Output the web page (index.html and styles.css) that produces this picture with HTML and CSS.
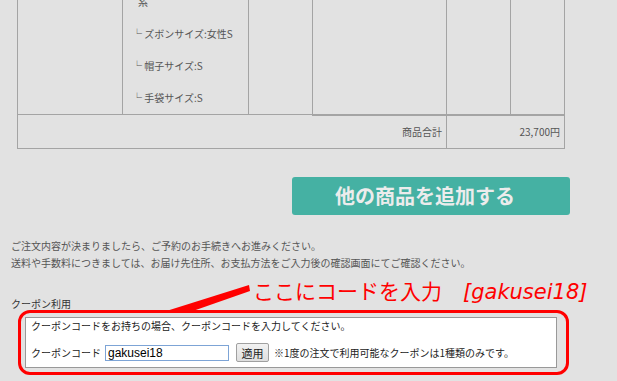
FILE: index.html
```html
<!DOCTYPE html>
<html lang="ja">
<head>
<meta charset="utf-8">
<title>カート</title>
<link rel="stylesheet" href="styles.css">
</head>
<body>
<div class="page">
  <table class="cart">
    <colgroup>
      <col class="c1"><col class="c2"><col class="c3"><col class="c4"><col class="c5"><col class="c6">
    </colgroup>
    <tr class="item">
      <td></td>
      <td class="opts">
        <div class="opt opt-wrap">系</div>
        <div class="opt">└ ズボンサイズ:女性S</div>
        <div class="opt">└ 帽子サイズ:S</div>
        <div class="opt">└ 手袋サイズ:S</div>
      </td>
      <td></td>
      <td class="thick"></td>
      <td class="thick"></td>
      <td class="thick"></td>
    </tr>
    <tr class="total">
      <td colspan="4" class="label">商品合計</td>
      <td colspan="2" class="value">23,700円</td>
    </tr>
  </table>

  <div class="add-row">
    <a class="add-btn">他の商品を追加する</a>
  </div>

  <p class="notice">ご注文内容が決まりましたら、ご予約のお手続きへお進みください。<br>送料や手数料につきましては、お届け先住所、お支払方法をご入力後の確認画面にてご確認ください。</p>

  <h3 class="coupon-title">クーポン利用</h3>
  <div class="coupon-box">
    <div class="coupon-lead">クーポンコードをお持ちの場合、クーポンコードを入力してください。</div>
    <div class="coupon-row">
      <span class="coupon-label">クーポンコード</span>
      <input class="coupon-input" type="text" value="gakusei18">
      <button class="coupon-apply" type="button">適用</button>
      <span class="coupon-note">※1度の注文で利用可能なクーポンは1種類のみです。</span>
    </div>
  </div>

  <div class="annot-rect"></div>
  <svg class="annot-pointer" width="617" height="381" viewBox="0 0 617 381">
    <polygon points="249,285 250,291 190,312 160,313" fill="#ff0000"/>
  </svg>
  <div class="annot-text">ここにコードを入力　<span class="annot-code">[gakusei18]</span></div>
</div>
</body>
</html>
```

FILE: styles.css
```css
html, body {
  margin: 0;
  padding: 0;
  background: #e2e2e2;
  overflow: hidden;
}
body {
  width: 617px;
  height: 381px;
  font-family: "Noto Sans CJK JP", "Noto Sans", sans-serif;
  color: #555;
  font-size: 10px;
}
.page {
  position: relative;
  display: flow-root;
  width: 617px;
  height: 381px;
}
.cart {
  border-collapse: collapse;
  table-layout: fixed;
  width: 547px;
  margin: -15px 0 0 17px;
}
.cart td {
  border: 1px solid #a4a4a4;
  padding: 0;
}
.c1 { width: 105px; }
.c2 { width: 126px; }
.c3 { width: 64px; }
.c4 { width: 134px; }
.c5 { width: 64px; }
.c6 { width: 54px; }
.cart td.thick {
  border-bottom: 2px solid #a4a4a4;
}
.opts {
  padding-left: 9px !important;
  vertical-align: top;
}
.opt {
  line-height: 32px;
  height: 32px;
  white-space: nowrap;
}
.opt-wrap {
  padding-left: 6px;
}
.total td {
  height: 32px;
  line-height: 32px;
  text-align: right;
  padding-right: 4px;
}
.add-row {
  margin: 28px 0 0 292px;
}
.add-btn {
  display: flex;
  justify-content: center;
  align-items: center;
  width: 278px;
  height: 38px;
  box-sizing: border-box;
  background: #45b1a3;
  border-radius: 3px;
  color: #ececec;
  font-size: 20px;
  font-weight: bold;
  padding-right: 12px;
}
.notice {
  margin: 22px 0 0 11px;
  line-height: 17px;
  color: #555;
}
.coupon-title {
  margin: 24px 0 0 11px;
  font-size: 10px;
  font-weight: normal;
  line-height: 17px;
  color: #333;
}
.coupon-box {
  margin: 5px 0 0 25px;
  width: 532px;
  height: 51px;
  box-sizing: border-box;
  background: #fff;
  border: 1px solid #999;
  padding: 0 5px;
  color: #222;
}
.coupon-lead {
  line-height: 16px;
  height: 16px;
}
.coupon-row {
  display: flex;
  align-items: center;
  height: 20px;
  margin-top: 9px;
  white-space: nowrap;
}
.coupon-input {
  margin: 0 0 0 4px;
  width: 124px;
  height: 16px;
  box-sizing: border-box;
  border: 1px solid #7da4d6;
  padding: 0 2px;
  font-family: "Liberation Sans", Arial, sans-serif;
  font-size: 12px;
  color: #000;
  background: #fff;
  outline: none;
}
.coupon-apply {
  margin: 0 0 0 7px;
  width: 33px;
  height: 19px;
  box-sizing: border-box;
  padding: 0;
  border: 1px solid #a0a0a0;
  border-radius: 2px;
  background: linear-gradient(#f2f2f2, #dedede);
  font-family: "Noto Sans CJK JP", sans-serif;
  font-size: 11px;
  color: #222;
}
.coupon-note {
  margin-left: 5px;
}
.annot-rect {
  position: absolute;
  left: 18px;
  top: 310px;
  width: 551px;
  height: 65px;
  box-sizing: border-box;
  border: 3px solid #ff0000;
  border-radius: 12px;
  pointer-events: none;
}
.annot-pointer {
  position: absolute;
  left: 0;
  top: 0;
  pointer-events: none;
}
.annot-text {
  position: absolute;
  left: 253px;
  top: 276px;
  font-size: 21px;
  line-height: 28px;
  color: #ff0000;
  white-space: nowrap;
}
.annot-code {
  font-family: "DejaVu Sans", "Open Sans", sans-serif;
  font-style: italic;
}
```
